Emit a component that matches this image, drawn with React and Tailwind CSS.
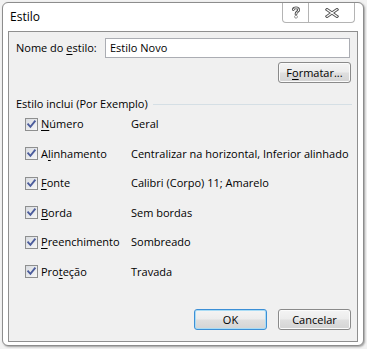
import React from "react";

function Box() {
  return (
    <div className="w-[13px] h-[13px] shrink-0 border border-[#8e8f8f] bg-[linear-gradient(135deg,#d8dbe0,#f7f7f7)] flex items-center justify-center">
      <svg width="11" height="11" viewBox="0 0 11 11">
        <path d="M2.2 5.4 L4.4 7.8 L8.8 2.4" stroke="#4b5c9c" strokeWidth="1.9" fill="none" strokeLinecap="square" />
      </svg>
    </div>
  );
}

function Row({ pre, u, post, value }) {
  return (
    <div className="flex items-center h-[16px] pl-[16px]">
      <Box />
      <div className="w-[90px] ml-[3px] whitespace-nowrap">
        {pre}
        <span className="underline underline-offset-[2px]">{u}</span>
        {post}
      </div>
      <div className="whitespace-nowrap">{value}</div>
    </div>
  );
}

function Btn({ children, primary }) {
  return (
    <div
      className={
        "w-[73px] h-[21px] rounded-[3px] border flex items-center justify-center bg-[linear-gradient(#f4f4f4_0%,#ececec_48%,#dfdfdf_52%,#d4d4d4_100%)] " +
        (primary
          ? "border-[#3c8fd6] shadow-[inset_0_0_0_1px_#a9dcf5]"
          : "border-[#8a8a8a] shadow-[inset_0_0_0_1px_#fbfbfb]")
      }
    >
      {children}
    </div>
  );
}

export default function App() {
  return (
    <div className="w-[367px] h-[349px] bg-[#f2f2f2] pt-[2px] pl-[2px] overflow-hidden font-['Open_Sans',sans-serif] text-[11px] leading-[16px] text-black">
      <div className="w-[362px] h-[344px] border border-[#8d8d8d] rounded-[6px] bg-white flex flex-col shadow-[1px_1px_2px_rgba(0,0,0,0.35)]">
        {/* title bar */}
        <div className="h-[28px] flex items-start shrink-0">
          <div className="pl-[7px] pt-[6px] text-[12px] leading-[16px]">Estilo</div>
          <div className="ml-auto mr-[8px] flex h-[20px] border border-t-0 border-[#b4b4b4] rounded-b-[4px] bg-white overflow-hidden">
            <div className="w-[26px] flex items-center justify-center border-r border-[#b4b4b4]">
              <svg width="10" height="13" viewBox="0 0 10 13">
                <g fill="none" strokeLinecap="round" strokeLinejoin="round">
                  <path d="M2.3 3.6 C2.3 1.2 7.7 1.2 7.7 3.8 C7.7 5.9 5 5.6 5 8" stroke="#555" strokeWidth="2.8" />
                  <circle cx="5" cy="10.8" r="0.3" stroke="#555" strokeWidth="2.6" />
                  <path d="M2.3 3.6 C2.3 1.2 7.7 1.2 7.7 3.8 C7.7 5.9 5 5.6 5 8" stroke="#fff" strokeWidth="1" />
                  <circle cx="5" cy="10.8" r="0.3" stroke="#fff" strokeWidth="0.8" />
                </g>
              </svg>
            </div>
            <div className="w-[45px] flex items-center justify-center">
              <svg width="14" height="10" viewBox="0 0 14 10">
                <g fill="none" strokeLinecap="square">
                  <path d="M2 1.5 L12 8.5 M12 1.5 L2 8.5" stroke="#555" strokeWidth="3" />
                  <path d="M2 1.5 L12 8.5 M12 1.5 L2 8.5" stroke="#fff" strokeWidth="1.1" />
                </g>
              </svg>
            </div>
          </div>
        </div>

        {/* panel */}
        <div className="mx-[5px] h-[311px] border border-[#8f8f8f] bg-[#f0f0f0] flex flex-col">
          <div className="flex items-center mt-[6px] pl-[7px]">
            <div className="w-[89px] whitespace-nowrap">
              Nome do <span className="underline underline-offset-[2px]">e</span>stilo:
            </div>
            <div className="w-[245px] h-[20px] border border-[#abadb3] bg-white flex items-center pl-[4px]">
              Estilo Novo
            </div>
          </div>
          <div className="self-end mr-[6px] mt-[4px]">
            <Btn>
              <span>
                F<span className="underline underline-offset-[2px]">o</span>rmatar...
              </span>
            </Btn>
          </div>

          <div className="flex items-center mt-[13px] pl-[7px] pr-[5px]">
            <div className="whitespace-nowrap">Estilo inclui (Por Exemplo)</div>
            <div className="flex-1 ml-[5px] h-px bg-[#d5dfe5]" />
          </div>

          <div className="flex flex-col gap-[13.6px] mt-[4px]">
            <Row pre="" u="N" post="úmero" value="Geral" />
            <Row pre="A" u="l" post="inhamento" value="Centralizar na horizontal, Inferior alinhado" />
            <Row pre="" u="F" post="onte" value="Calibri (Corpo) 11; Amarelo" />
            <Row pre="" u="B" post="orda" value="Sem bordas" />
            <Row pre="" u="P" post="reenchimento" value="Sombreado" />
            <Row pre="Pro" u="t" post="eção" value="Travada" />
          </div>

          <div className="mt-auto mb-[11px] mr-[6px] flex justify-end gap-[11px]">
            <Btn primary>OK</Btn>
            <Btn>Cancelar</Btn>
          </div>
        </div>
      </div>
    </div>
  );
}
